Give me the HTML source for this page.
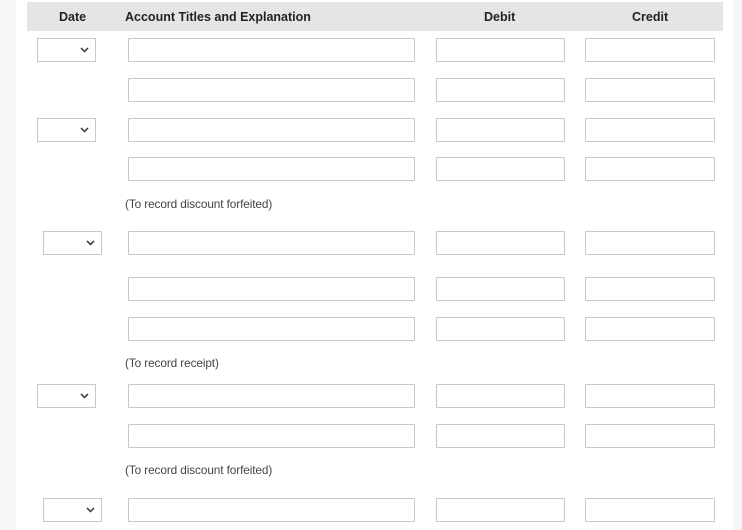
<!DOCTYPE html>
<html><head><style>
body{margin:0;width:742px;height:530px;background:#fff;position:relative;overflow:hidden;font-family:"Liberation Sans",sans-serif}
.l{position:absolute;left:0;top:0;width:16px;height:530px;background:#f7f7f7}
.r{position:absolute;left:733px;top:0;width:9px;height:530px;background:#f7f7f7}
.h{position:absolute;left:27px;top:2px;width:696px;height:29px;background:#e5e5e5;font-size:12.5px;font-weight:bold;color:#222}
.h span{position:absolute;top:8px}
.i{position:absolute;height:22px;border:1px solid #c8c8c8;background:#fff;border-radius:1px}
.s{position:absolute;height:22px;width:57px;border:1px solid #c8c8c8;background:#fff}
.s svg{position:absolute;right:6px;top:8px}
.n{position:absolute;left:125px;font-size:11.8px;color:#444;letter-spacing:-0.1px}
</style></head><body>
<div class="l"></div><div class="r"></div>
<div class="h"><span style="left:32px">Date</span><span style="left:98px">Account Titles and Explanation</span><span style="left:457px">Debit</span><span style="left:605px">Credit</span></div>
<div id="c"></div>
<script>
var rows=[[38,37],[78,0],[118,37],[157,0],[231,43],[277,0],[317,0],[384,37],[424,0],[498,43]];
var h='';
rows.forEach(function(r){var y=r[0];
if(r[1])h+='<div class="s" style="left:'+r[1]+'px;top:'+y+'px"><svg width="9" height="6"><path d="M1 1L4.5 4.5L8 1" stroke="#444" stroke-width="1.6" fill="none"/></svg></div>';
h+='<div class="i" style="left:128px;top:'+y+'px;width:285px"></div>';
h+='<div class="i" style="left:436px;top:'+y+'px;width:127px"></div>';
h+='<div class="i" style="left:585px;top:'+y+'px;width:128px"></div>';});
[[197,'(To record discount forfeited)'],[356,'(To record receipt)'],[463,'(To record discount forfeited)']].forEach(function(n){h+='<div class="n" style="top:'+n[0]+'px">'+n[1]+'</div>';});
document.getElementById('c').innerHTML=h;
</script>
</body></html>
